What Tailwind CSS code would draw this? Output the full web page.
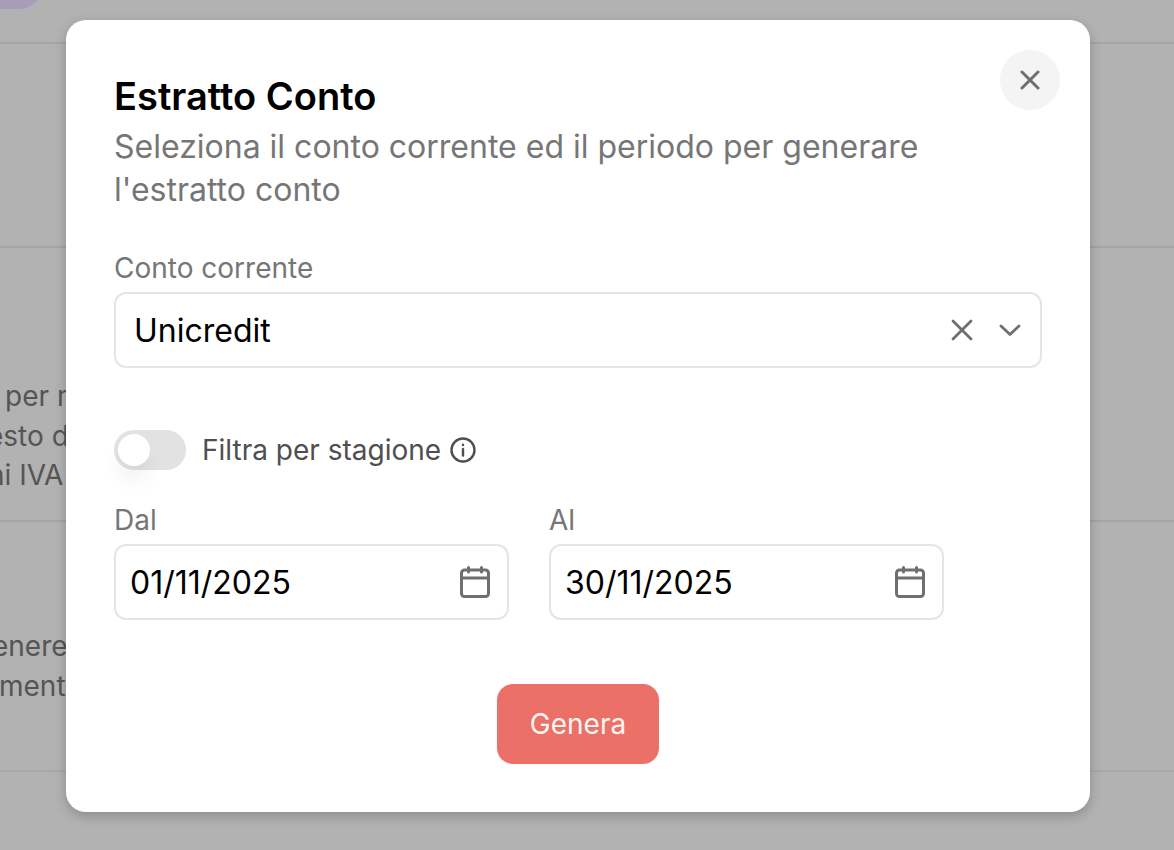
<!DOCTYPE html>
<html lang="it">
<head>
<meta charset="utf-8">
<script src="https://cdn.jsdelivr.net/npm/@tailwindcss/browser@4"></script>
<title>Estratto Conto</title>
</head>
<body class="font-['Inter',sans-serif]">
<div class="relative w-[1174px] h-[850px] overflow-hidden bg-[#b2b2b2]">
  <!-- page behind the overlay -->
  <div class="flex flex-col text-[#555555] text-[28px] leading-[39.5px] whitespace-nowrap">
    <div class="h-[44px] border-b-2 border-[#a5a5a5]">
      <div class="w-[43px] h-[40px] -mt-[31px] rounded-br-[24px] bg-[#a99cb9]"></div>
    </div>
    <div class="h-[204px] border-b-2 border-[#a5a5a5]"></div>
    <div class="h-[274px] border-b-2 border-[#a5a5a5] pt-[129px]">
      <p class="ml-[5px]">per m</p>
      <p class="-ml-[13px]">esto di</p>
      <p class="-ml-[12px]">ni IVA</p>
    </div>
    <div class="h-[250px] border-b-2 border-[#a8a8a8] pt-[105px]">
      <p class="-ml-[8px]">enere</p>
      <p class="-ml-[1px]">ment</p>
    </div>
  </div>

  <!-- modal -->
  <div class="absolute left-[66px] top-[20px] w-[1024px] h-[792px] rounded-[20px] bg-white px-[48px] pt-[54px] shadow-[0_4px_12px_rgba(0,0,0,0.22)]">
    <button class="absolute right-[30px] top-[30px] w-[60px] h-[60px] rounded-full bg-[#f4f4f4] flex items-center justify-center">
      <svg class="w-[20px] h-[20px]" viewBox="0 0 20 20" fill="none" stroke="#6f6f6f" stroke-width="3" stroke-linecap="round"><path d="M2 2L18 18M18 2L2 18"/></svg>
    </button>

    <h2 class="text-[38px] leading-[44px] font-semibold text-black mb-[7px]">Estratto Conto</h2>
    <p class="text-[32px] leading-[43px] text-[#767676] w-[880px]">Seleziona il conto corrente ed il periodo per generare l'estratto conto</p>

    <label class="block mt-[37px] text-[28px] leading-[40px] text-[#767676]">Conto corrente</label>
    <div class="mt-[4px] w-[928px] h-[76px] rounded-[12px] border-2 border-[#e5e5e5] flex items-center pl-[18px] pr-[19px]">
      <span class="flex-1 pt-[2px] text-[32px] text-black">Unicredit</span>
      <svg class="w-[22px] h-[22px] mr-[26px]" viewBox="0 0 22 22" fill="none" stroke="#6f6f6f" stroke-width="2.8" stroke-linecap="round"><path d="M2 2L20 20M20 2L2 20"/></svg>
      <svg class="w-[22px] h-[14px]" viewBox="0 0 22 14" fill="none" stroke="#6f6f6f" stroke-width="2.8" stroke-linecap="round" stroke-linejoin="round"><path d="M2 3L11 11.5L20 3"/></svg>
    </div>

    <div class="mt-[62px] flex items-center">
      <div class="relative w-[72px] h-[40px] rounded-full bg-[#e2e2e2]">
        <div class="absolute left-[4px] top-[4px] w-[32px] h-[32px] rounded-full bg-white shadow-[0_16px_20px_rgba(0,0,0,0.05)]"></div>
      </div>
      <span class="ml-[16px] text-[28px] leading-[40px] text-[#4f4f4f]">Filtra per stagione</span>
      <svg class="ml-[9px] w-[26px] h-[26px]" viewBox="0 0 26 26" fill="none" stroke="#4f4f4f" stroke-width="2.4" stroke-linecap="round"><circle cx="13" cy="13" r="11.5"/><path d="M13 12V18.5"/><path d="M13 7.8V8"/></svg>
    </div>

    <div class="mt-[30px] flex gap-[40px]">
      <div class="w-[395px]">
        <label class="block text-[28px] leading-[40px] text-[#767676]">Dal</label>
        <div class="mt-[4px] h-[76px] rounded-[12px] border-2 border-[#e5e5e5] flex items-center justify-between pl-[14px] pr-[17px]">
          <span class="pt-[2px] text-[32px] text-black">01/11/2025</span>
          <svg class="w-[30px] h-[32px]" viewBox="0 0 30 32" fill="none" stroke="#6f6f6f" stroke-width="3" stroke-linecap="round" stroke-linejoin="round"><rect x="1.5" y="4" width="27" height="26.5" rx="3"/><path d="M1.5 12H28.5M8.5 1.5V6M21.5 1.5V6"/></svg>
        </div>
      </div>
      <div class="w-[395px]">
        <label class="block text-[28px] leading-[40px] text-[#767676]">Al</label>
        <div class="mt-[4px] h-[76px] rounded-[12px] border-2 border-[#e5e5e5] flex items-center justify-between pl-[14px] pr-[17px]">
          <span class="pt-[2px] text-[32px] text-black">30/11/2025</span>
          <svg class="w-[30px] h-[32px]" viewBox="0 0 30 32" fill="none" stroke="#6f6f6f" stroke-width="3" stroke-linecap="round" stroke-linejoin="round"><rect x="1.5" y="4" width="27" height="26.5" rx="3"/><path d="M1.5 12H28.5M8.5 1.5V6M21.5 1.5V6"/></svg>
        </div>
      </div>
    </div>

    <div class="mt-[64px] flex justify-center">
      <button class="w-[162px] h-[80px] rounded-[16px] bg-[#ea7068] text-[#fff5f4] text-[28px] font-normal">Genera</button>
    </div>
  </div>
</div>
</body>
</html>
